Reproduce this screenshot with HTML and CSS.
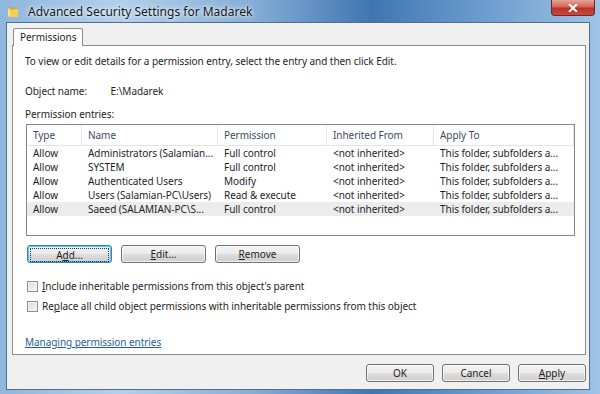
FILE: index.html
```html
<!DOCTYPE html>
<html lang="en">
<head>
  <meta charset="UTF-8" />
  <title>Advanced Security Settings for Madarek</title>
  <link rel="stylesheet" href="styles.css">
</head>
<body>
  <div class="window">
    <div class="titlebar">
      <svg class="folder" width="12" height="13" viewBox="0 0 12 13">
        <path d="M1 2 L5 2 L6 3 L11 3 L11 12 L1 12 Z" fill="#d9a72c"/>
        <path d="M1 5 L11 4 L11 12 L1 12 Z" fill="#f3cf5a"/>
        <path d="M2 3 L2 11" stroke="#fff2b0" stroke-width="1"/>
      </svg>
      <span class="title">Advanced Security Settings for Madarek</span>
      <div class="close">
        <svg width="10" height="8" viewBox="0 0 10 8"><path d="M1 0 L9 8 M9 0 L1 8" stroke="#fff" stroke-width="2"/></svg>
      </div>
    </div>

    <div class="client">
      <div class="tabs">
        <div class="tab">Permissions</div>
      </div>

      <div class="panel">
        <p class="intro">To view or edit details for a permission entry, select the entry and then click Edit.</p>

        <div class="object">
          <span class="label">Object name:</span>
          <span>E:\Madarek</span>
        </div>

        <div class="entries-label">Permission en<u>t</u>ries:</div>

        <div class="listbox">
          <div class="row head">
            <span>Type</span>
            <span>Name</span>
            <span>Permission</span>
            <span>Inherited From</span>
            <span>Apply To</span>
          </div>
          <div class="row">
            <span>Allow</span>
            <span>Administrators (Salamian...</span>
            <span>Full control</span>
            <span>&lt;not inherited&gt;</span>
            <span>This folder, subfolders a...</span>
          </div>
          <div class="row">
            <span>Allow</span>
            <span>SYSTEM</span>
            <span>Full control</span>
            <span>&lt;not inherited&gt;</span>
            <span>This folder, subfolders a...</span>
          </div>
          <div class="row">
            <span>Allow</span>
            <span>Authenticated Users</span>
            <span>Modify</span>
            <span>&lt;not inherited&gt;</span>
            <span>This folder, subfolders a...</span>
          </div>
          <div class="row">
            <span>Allow</span>
            <span>Users (Salamian-PC\Users)</span>
            <span>Read &amp; execute</span>
            <span>&lt;not inherited&gt;</span>
            <span>This folder, subfolders a...</span>
          </div>
          <div class="row selected">
            <span>Allow</span>
            <span>Saeed (SALAMIAN-PC\S...</span>
            <span>Full control</span>
            <span>&lt;not inherited&gt;</span>
            <span>This folder, subfolders a...</span>
          </div>
        </div>

        <div class="actions">
          <button class="btn focus"><span class="focus-ring">A<u>d</u>d...</span></button>
          <button class="btn"><u>E</u>dit...</button>
          <button class="btn"><u>R</u>emove</button>
        </div>

        <label class="check"><span class="box"></span><span><u>I</u>nclude inheritable permissions from this object's parent</span></label>
        <label class="check"><span class="box"></span><span>Re<u>p</u>lace all child object permissions with inheritable permissions from this object</span></label>

        <a class="link" href="#">Managing permission entries</a>
      </div>

      <div class="footer">
        <button class="btn wide">OK</button>
        <button class="btn wide">Cancel</button>
        <button class="btn wide"><u>A</u>pply</button>
      </div>
    </div>
  </div>
</body>
</html>
```

FILE: styles.css
```css
body {
  margin: 0;
  width: 600px;
  height: 394px;
  overflow: hidden;
  font-family: "Noto Sans", "Open Sans", sans-serif;
  font-size: 10px;
  letter-spacing: -0.05px;
  color: #1e1e1e;
}

.window {
  height: 394px;
  box-sizing: border-box;
  padding: 0 10px 4px 6px;
  background: linear-gradient(90deg, #8fb6dc 0%, #b3d0ea 20%, #86aed6 42%, #3f76b2 62%, #6a9bcd 80%, #9ec3e6 100%);
  display: flex;
  flex-direction: column;
}

.titlebar {
  height: 22px;
  display: flex;
  align-items: center;
  position: relative;
}

.folder {
  margin: 0 9px 0 1px;
}

.title {
  font-size: 12px;
  letter-spacing: 0;
  color: #101820;
  text-shadow: 0 0 6px rgba(255,255,255,0.9), 0 0 3px rgba(255,255,255,0.9);
}

.close {
  position: absolute;
  top: 0;
  right: -5px;
  width: 44px;
  height: 16px;
  box-sizing: border-box;
  border: 1px solid #6b2a24;
  border-top: none;
  border-radius: 0 0 4px 4px;
  background: linear-gradient(#e6a397 0%, #d4655a 45%, #b8332a 55%, #c8483c 100%);
  display: flex;
  align-items: center;
  justify-content: center;
}

.client {
  flex: 1;
  background: #f0f0f0;
  border: 1px solid #4f6f92;
  padding: 5px 3px 0 5px;
  display: flex;
  flex-direction: column;
}

.tabs {
  display: flex;
  padding-left: 1px;
}

.tab {
  background: #fff;
  border: 1px solid #898c95;
  border-bottom: none;
  padding: 1px 6px 2px;
  margin-bottom: -1px;
  position: relative;
  z-index: 1;
  height: 14px;
  line-height: 14px;
  border-radius: 2px 2px 0 0;
}

.panel {
  background: #fff;
  border: 1px solid #898c95;
  height: 310px;
  box-sizing: border-box;
  padding: 8px 12px 0 12px;
  display: flex;
  flex-direction: column;
}

.intro {
  margin: 0;
  line-height: 14px;
}

.object {
  margin-top: 16px;
  line-height: 14px;
}

.object .label {
  display: inline-block;
  width: 83px;
}

.entries-label {
  margin-top: 9px;
  line-height: 14px;
}

.entries-label u {
  text-decoration: none;
}

.listbox {
  margin: 3px 0 0 1px;
  width: 549px;
  height: 112px;
  box-sizing: border-box;
  border: 1px solid #828790;
}

.row {
  display: grid;
  grid-template-columns: 55px 136px 109px 107px 1fr;
  height: 14px;
  line-height: 14px;
}

.row span {
  padding-left: 6px;
  white-space: nowrap;
  overflow: hidden;
}

.row.head {
  height: 20px;
  line-height: 20px;
  color: #3d4b5c;
  border-bottom: 1px solid #e5e5e5;
}

.row.head span {
  border-right: 1px solid #e3e8ee;
}

.row.selected {
  background: #ececec;
}

.actions {
  display: flex;
  gap: 9px;
  margin: 9px 0 0 2px;
}

.btn {
  font-family: inherit;
  font-size: 10px;
  color: #1e1e1e;
  width: 85px;
  height: 18px;
  padding: 0;
  border: 1px solid #707070;
  border-radius: 3px;
  background: linear-gradient(#f3f3f3 0%, #ebebeb 48%, #dddddd 52%, #cfcfcf 100%);
  box-shadow: inset 0 0 0 1px rgba(255,255,255,0.7);
}

.btn.focus {
  border-color: #3c7fb1;
  box-shadow: inset 0 0 0 1px #48d0f6;
  padding: 2px;
}

.focus-ring {
  display: block;
  height: 12px;
  line-height: 12px;
  border: 1px dotted #333;
}

.check {
  display: flex;
  align-items: center;
  gap: 4px;
  margin: 16px 0 0 2px;
  line-height: 14px;
}

.check + .check {
  margin-top: 6px;
}

.box {
  width: 9px;
  height: 9px;
  border: 1px solid #8e8f8f;
  background: linear-gradient(135deg, #dcdcdc, #f6f6f6);
  box-shadow: inset 0 0 0 1px #f4f4f4;
}

.link {
  margin-top: 22px;
  color: #1f5e9e;
  line-height: 14px;
  align-self: flex-start;
}

.footer {
  display: flex;
  justify-content: flex-end;
  gap: 8px;
  padding: 9px 0 0;
}

.btn.wide {
  width: 68px;
}
```
